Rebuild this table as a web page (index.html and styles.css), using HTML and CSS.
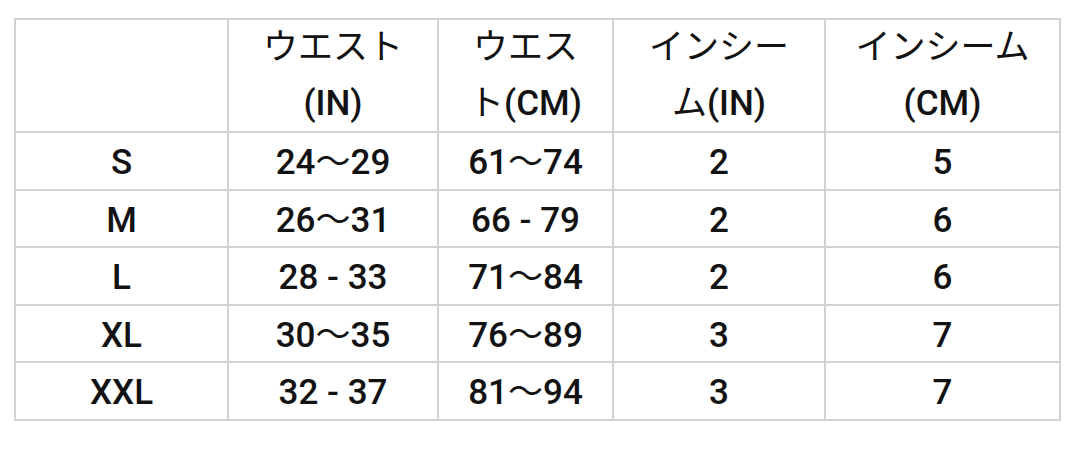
FILE: index.html
```html
<!DOCTYPE html>
<html lang="ja">
<head>
<meta charset="utf-8">
<link rel="stylesheet" href="styles.css">
</head>
<body>
<div class="wrap">
<table class="size">
  <colgroup>
    <col class="c1"><col class="c2"><col class="c3"><col class="c4"><col class="c5">
  </colgroup>
  <thead>
    <tr>
      <th></th>
      <th><span class="jp">ウエスト</span><br>(IN)</th>
      <th><span class="jp">ウエス</span><br><span class="jp">ト</span>(CM)</th>
      <th><span class="jp">インシー</span><br><span class="jp">ム</span>(IN)</th>
      <th><span class="jp">インシーム</span><br>(CM)</th>
    </tr>
  </thead>
  <tbody>
    <tr><td>S</td><td>24<span class="jp">〜</span>29</td><td>61<span class="jp">〜</span>74</td><td>2</td><td>5</td></tr>
    <tr><td>M</td><td>26<span class="jp">〜</span>31</td><td>66 - 79</td><td>2</td><td>6</td></tr>
    <tr><td>L</td><td>28 - 33</td><td>71<span class="jp">〜</span>84</td><td>2</td><td>6</td></tr>
    <tr><td>XL</td><td>30<span class="jp">〜</span>35</td><td>76<span class="jp">〜</span>89</td><td>3</td><td>7</td></tr>
    <tr><td>XXL</td><td>32 - 37</td><td>81<span class="jp">〜</span>94</td><td>3</td><td>7</td></tr>
  </tbody>
</table>
</div>
</body>
</html>
```

FILE: styles.css
```css
html, body {
  margin: 0;
  padding: 0;
  background: #ffffff;
}
.wrap {
  padding: 18px 0 0 14px;
}
.size {
  border-collapse: collapse;
  font-family: Roboto, "Noto Sans CJK JP", sans-serif;
  font-size: 35px;
  font-weight: 500;
  color: #121212;
  table-layout: fixed;
  width: 1047px;
}
.c1 { width: 213px; }
.c2 { width: 210px; }
.c3 { width: 175px; }
.c4 { width: 212px; }
.c5 { width: 235px; }
.size th, .size td {
  border: 2px solid #d3d3d3;
  text-align: center;
  padding: 0;
  font-weight: 500;
}
.size th {
  line-height: 55.5px;
}
.size td {
  line-height: 51.5px;
  padding-top: 4px;
}
.jp {
  font-family: "Noto Sans CJK JP", sans-serif;
  font-weight: 400;
  line-height: 1;
}
```
